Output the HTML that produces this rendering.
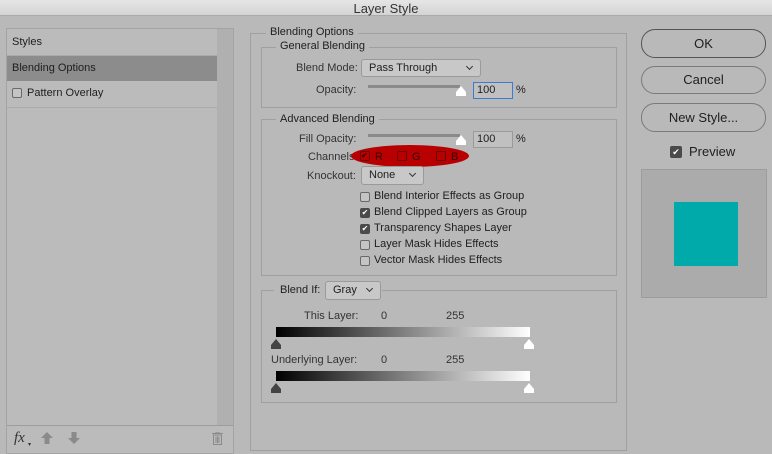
<!DOCTYPE html>
<html><head><style>
*{margin:0;padding:0;box-sizing:border-box}
body{width:772px;height:454px;background:#b9b9b9;font-family:"Liberation Sans",sans-serif;font-size:11px;color:#1e1e1e;position:relative;overflow:hidden}
.a{position:absolute}
.t{position:absolute;white-space:nowrap}
.box{position:absolute;border:1px solid #a0a0a0}
.leg{position:absolute;background:#b9b9b9;padding:0 4px;white-space:nowrap}
.cb{position:absolute;width:10px;height:10px;border:1px solid #6a6a6a;border-radius:2px;background:#c4c4c4}
.cbc{position:absolute;width:10px;height:10px;border-radius:2px;background:#4a4a4a;color:#fff;font-size:8px;line-height:10px;text-align:center}
.sel{position:absolute;border:1px solid #9a9a9a;border-radius:3px;background:#c8c8c8;padding-left:7px;line-height:16px}
.sel:after{content:"";position:absolute;right:8px;top:4px;width:4px;height:4px;border-right:1px solid #333;border-bottom:1px solid #333;transform:rotate(45deg)}
.inp{position:absolute;border:1px solid #9a9a9a;background:#c0c0c0;padding-left:3px;line-height:15px}
.btn{position:absolute;left:641px;width:125px;border:1px solid #7a7a7a;border-radius:14px;text-align:center;font-size:13px}
.grad{position:absolute;height:10px;background:linear-gradient(to right,#000,#fff)}
.tri{position:absolute;width:10px;height:10px}
</style></head><body>
<div class="a" style="left:0;top:0;width:772px;height:16px;background:linear-gradient(#e6e6e6,#d4d4d4);border-bottom:1px solid #aaa"></div>
<div class="t" style="left:0;width:772px;top:1px;text-align:center;font-size:13px;color:#333">Layer Style</div>

<div class="a" style="left:6px;top:28px;width:228px;height:426px;border:1px solid #a4a4a4;background:#bbb"></div>
<div class="a" style="left:217px;top:29px;width:16px;height:396px;background:#b0b0b0"></div>
<div class="a" style="left:7px;top:55px;width:210px;height:1px;background:#ababab"></div>
<div class="a" style="left:7px;top:56px;width:210px;height:25px;background:#8c8c8c"></div>
<div class="a" style="left:7px;top:107px;width:210px;height:1px;background:#ababab"></div>
<div class="a" style="left:7px;top:425px;width:226px;height:1px;background:#9c9c9c"></div>
<div class="t" style="left:12px;top:36px">Styles</div>
<div class="t" style="left:12px;top:62px">Blending Options</div>
<div class="cb" style="left:12px;top:88px"></div>
<div class="t" style="left:27px;top:87px">Pattern Overlay</div>
<div class="t" style="left:14px;top:430px;font-family:'Liberation Serif',serif;font-style:italic;font-size:15px;color:#333">fx</div>
<div class="t" style="left:28px;top:441px;font-size:6px;color:#333">▾</div>
<svg class="a" style="left:41px;top:432px" width="12" height="12"><path d="M6 0L12 6H8.5V12H3.5V6H0Z" fill="#8a8a8a"/></svg>
<svg class="a" style="left:68px;top:432px" width="12" height="12"><path d="M6 12L12 6H8.5V0H3.5V6H0Z" fill="#8a8a8a"/></svg>
<svg class="a" style="left:212px;top:432px" width="11" height="13"><path d="M0 1.5H11M4 1.5V0H7V1.5M1.5 3H9.5V12.5H1.5ZM4 4.5V11M5.5 4.5V11M7 4.5V11" stroke="#8a8a8a" fill="none"/></svg>

<div class="box" style="left:250px;top:33px;width:377px;height:418px"></div>
<div class="leg" style="left:266px;top:26px">Blending Options</div>
<div class="box" style="left:261px;top:47px;width:356px;height:61px"></div>
<div class="leg" style="left:276px;top:40px">General Blending</div>
<div class="t" style="left:296px;top:62px;color:#333">Blend Mode:</div>
<div class="sel" style="left:361px;top:59px;width:120px;height:18px">Pass Through</div>
<div class="t" style="left:316px;top:84px;color:#333">Opacity:</div>
<div class="a" style="left:368px;top:85px;width:92px;height:3px;background:#8a8a8a"></div>
<svg class="tri" style="left:456px;top:86px"><path d="M5 0L10 6V10H0V6Z" fill="#fff"/></svg>
<div class="inp" style="left:473px;top:82px;width:40px;height:17px;border:1px solid #3a7bd5">100</div>
<div class="t" style="left:516px;top:84px">%</div>

<div class="box" style="left:261px;top:119px;width:356px;height:157px"></div>
<div class="leg" style="left:276px;top:113px">Advanced Blending</div>
<div class="t" style="left:299px;top:133px;color:#333">Fill Opacity:</div>
<div class="a" style="left:368px;top:134px;width:92px;height:3px;background:#8a8a8a"></div>
<svg class="tri" style="left:456px;top:135px"><path d="M5 0L10 6V10H0V6Z" fill="#fff"/></svg>
<div class="inp" style="left:473px;top:131px;width:40px;height:17px">100</div>
<div class="t" style="left:516px;top:133px">%</div>
<div class="t" style="left:308px;top:151px;color:#333">Channels:</div>
<div class="a" style="left:351px;top:145px;width:118px;height:22px;border-radius:50%;background:#b80000"></div>
<div class="a" style="left:360px;top:151px;width:10px;height:10px;border:1px solid #600;border-radius:2px;color:#300;font-size:8px;line-height:8px">✔</div>
<div class="t" style="left:375px;top:151px;color:#300">R</div>
<div class="a" style="left:397px;top:151px;width:10px;height:10px;border:1px solid #600;border-radius:2px"></div>
<div class="t" style="left:412px;top:151px;color:#300">G</div>
<div class="a" style="left:436px;top:151px;width:10px;height:10px;border:1px solid #600;border-radius:2px"></div>
<div class="t" style="left:451px;top:151px;color:#300">B</div>
<div class="t" style="left:307px;top:170px;color:#333">Knockout:</div>
<div class="sel" style="left:361px;top:166px;width:63px;height:19px">None</div>
<div class="cb" style="left:360px;top:192px"></div><div class="t" style="left:374px;top:190px">Blend Interior Effects as Group</div>
<div class="cbc" style="left:360px;top:208px">✔</div><div class="t" style="left:374px;top:206px">Blend Clipped Layers as Group</div>
<div class="cbc" style="left:360px;top:224px">✔</div><div class="t" style="left:374px;top:222px">Transparency Shapes Layer</div>
<div class="cb" style="left:360px;top:240px"></div><div class="t" style="left:374px;top:238px">Layer Mask Hides Effects</div>
<div class="cb" style="left:360px;top:256px"></div><div class="t" style="left:374px;top:254px">Vector Mask Hides Effects</div>

<div class="box" style="left:261px;top:290px;width:356px;height:113px"></div>
<div class="a" style="left:274px;top:282px;width:108px;height:18px;background:#b9b9b9"></div>
<div class="t" style="left:280px;top:284px">Blend If:</div>
<div class="sel" style="left:325px;top:281px;width:56px;height:19px">Gray</div>
<div class="t" style="left:304px;top:310px;color:#333">This Layer:</div>
<div class="t" style="left:381px;top:310px;color:#333">0</div>
<div class="t" style="left:446px;top:310px;color:#333">255</div>
<div class="grad" style="left:276px;top:327px;width:254px"></div>
<svg class="tri" style="left:271px;top:339px"><path d="M5 0L10 6V10H0V6Z" fill="#444"/></svg>
<svg class="tri" style="left:524px;top:339px"><path d="M5 0L10 6V10H0V6Z" fill="#fff"/></svg>
<div class="t" style="left:271px;top:354px;color:#333">Underlying Layer:</div>
<div class="t" style="left:381px;top:354px;color:#333">0</div>
<div class="t" style="left:446px;top:354px;color:#333">255</div>
<div class="grad" style="left:276px;top:371px;width:254px"></div>
<svg class="tri" style="left:271px;top:383px"><path d="M5 0L10 6V10H0V6Z" fill="#444"/></svg>
<svg class="tri" style="left:524px;top:383px"><path d="M5 0L10 6V10H0V6Z" fill="#fff"/></svg>

<div class="btn" style="top:29px;height:29px;line-height:27px;border-color:#555">OK</div>
<div class="btn" style="top:66px;height:28px;line-height:26px">Cancel</div>
<div class="btn" style="top:103px;height:29px;line-height:27px">New Style...</div>
<div class="cbc" style="left:670px;top:146px;width:12px;height:12px;line-height:12px;font-size:9px">✔</div>
<div class="t" style="left:689px;top:144px;font-size:13px">Preview</div>
<div class="a" style="left:641px;top:169px;width:126px;height:129px;background:#ababab;border:1px solid #9c9c9c"></div>
<div class="a" style="left:674px;top:202px;width:64px;height:64px;background:#00aaaa"></div>
</body></html>
